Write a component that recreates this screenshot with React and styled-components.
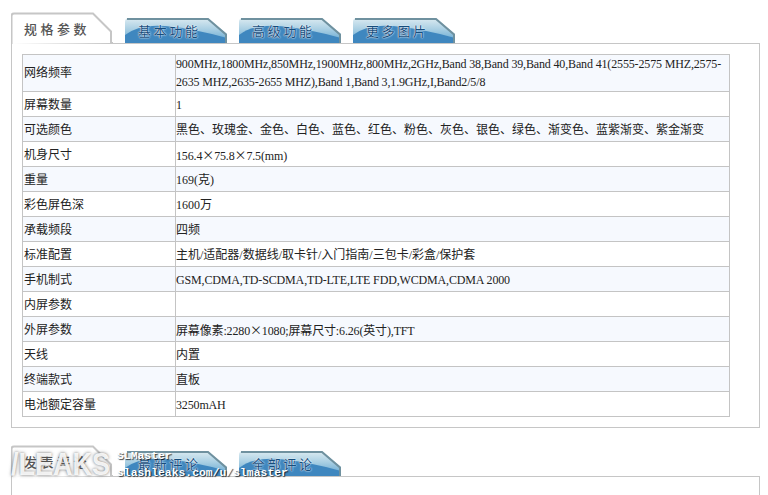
import styled, { createGlobalStyle } from 'styled-components';

const specs = [
  ['网络频率', '900MHz,1800MHz,850MHz,1900MHz,800MHz,2GHz,Band 38,Band 39,Band 40,Band 41(2555-2575 MHZ,2575-2635 MHZ,2635-2655 MHZ),Band 1,Band 3,1.9GHz,I,Band2/5/8'],
  ['屏幕数量', '1'],
  ['可选颜色', '黑色、玫瑰金、金色、白色、蓝色、红色、粉色、灰色、银色、绿色、渐变色、蓝紫渐变、紫金渐变'],
  ['机身尺寸', '156.4×75.8×7.5(mm)'],
  ['重量', '169(克)'],
  ['彩色屏色深', '1600万'],
  ['承载频段', '四频'],
  ['标准配置', '主机/适配器/数据线/取卡针/入门指南/三包卡/彩盒/保护套'],
  ['手机制式', 'GSM,CDMA,TD-SCDMA,TD-LTE,LTE FDD,WCDMA,CDMA 2000'],
  ['内屏参数', ''],
  ['外屏参数', '屏幕像素:2280×1080;屏幕尺寸:6.26(英寸),TFT'],
  ['天线', '内置'],
  ['终端款式', '直板'],
  ['电池额定容量', '3250mAH'],
];

// the × in the original is the wide CJK glyph
function specValue(value) {
  return value.split('×').map((part, i) => (
    <span key={i}>
      {i > 0 && <WideTimes>×</WideTimes>}
      {part}
    </span>
  ));
}

export default function App() {
  return (
    <Page>
      <GlobalStyle />
      <Section>
        <TabBar>
          <ActiveTab label="规格参数" />
          <BlueTab label="基本功能" id="a" />
          <BlueTab label="高级功能" id="b" />
          <BlueTab label="更多图片" id="c" />
        </TabBar>
        <Panel>
          <SpecTable>
            <tbody>
              {specs.map(([name, value]) => (
                <tr key={name}>
                  <LabelCell>{name}</LabelCell>
                  <ValueCell $latin={/^[\x00-\x7f]+$|×/.test(value)}>{specValue(value)}</ValueCell>
                </tr>
              ))}
            </tbody>
          </SpecTable>
        </Panel>
      </Section>
      <CommentSection>
        <TabBar>
          <ActiveTab label="发表评论" />
          <BlueTab label="最新评论" id="d" />
          <BlueTab label="全部评论" id="e" />
        </TabBar>
        <EmptyPanel />
      </CommentSection>
      <LeaksMark>/LEAKS</LeaksMark>
      <MarkName>SLMaster</MarkName>
      <MarkUrl>slashleaks.com/u/slmaster</MarkUrl>
    </Page>
  );
}

function ActiveTab({ label }) {
  return (
    <ActiveTabBox>
      <TabShape width="102" height="32" viewBox="0 0 102 32">
        <path d="M0.5 32V4Q0.5 1.5 3 1.5H82L100 19.5V31H102" fill="#fff" stroke="#c6c6c6" strokeWidth="2" />
        <path d="M0.5 32V5" stroke="#c6c6c6" strokeWidth="1" fill="none" />
      </TabShape>
      <ActiveLabel>{label}</ActiveLabel>
    </ActiveTabBox>
  );
}

function BlueTab({ label, id }) {
  return (
    <BlueTabBox>
      <TabShape width="102" height="25" viewBox="0 0 102 25">
        <defs>
          <linearGradient id={id} x1="0" y1="0" x2="0" y2="1">
            <stop offset="0" stopColor="#dcebf1" />
            <stop offset="0.45" stopColor="#a9cfe3" />
            <stop offset="1" stopColor="#5da3cf" />
          </linearGradient>
        </defs>
        <path d="M0 25V4Q0 0 4 0H83L102 16V25Z" fill={`url(#${id})`} />
        <path d="M0 25V17Q14 6 40 8Q66 10 102 20V25Z" fill="#3f87bf" />
        <path d="M2 1H83L101 16.5V25" fill="none" stroke="#6f919f" strokeWidth="2" />
      </TabShape>
      <BlueLabel>{label}</BlueLabel>
    </BlueTabBox>
  );
}

const GlobalStyle = createGlobalStyle`
  html, body {
    margin: 0;
    padding: 0;
    background: #fff;
  }
`;

const Page = styled.div`
  position: relative;
  box-sizing: border-box;
  width: 768px;
  height: 495px;
  padding: 12px 8px 0 11px;
  overflow: hidden;
  font-family: "Liberation Serif", "Noto Sans CJK SC", serif;
  font-size: 12px;
  color: #222;
`;

const Section = styled.section`
  display: flex;
  flex-direction: column;
`;

const CommentSection = styled(Section)`
  margin-top: 17px;
`;

const TabBar = styled.div`
  display: flex;
  align-items: flex-end;
  gap: 12px;
  height: 32px;
  margin-bottom: -1px;
  position: relative;
  z-index: 1;
`;

const ActiveTabBox = styled.div`
  position: relative;
  width: 102px;
  height: 32px;
`;

const BlueTabBox = styled.div`
  position: relative;
  width: 102px;
  height: 25px;
  margin-bottom: 1px;
`;

const TabShape = styled.svg`
  position: absolute;
  inset: 0;
  display: block;
`;

const ActiveLabel = styled.span`
  position: relative;
  display: block;
  padding: 7px 0 0 13px;
  font-family: "Noto Sans CJK SC", sans-serif;
  font-size: 13px;
  font-weight: 500;
  line-height: 19px;
  letter-spacing: 3.5px;
  color: #555;
`;

const BlueLabel = styled.span`
  position: relative;
  display: block;
  padding: 3px 0 0 13px;
  font-family: "Noto Sans CJK SC", sans-serif;
  font-size: 13px;
  line-height: 19px;
  letter-spacing: 2.7px;
  color: #164d7c;
  text-shadow: 0 0 2px #fff, 0 0 1px #fff;
`;

const Panel = styled.div`
  box-sizing: border-box;
  width: 749px;
  height: 385px;
  padding: 10px;
  border: 1px solid #c6c6c6;
`;

const EmptyPanel = styled(Panel)`
  height: 60px;
`;

const SpecTable = styled.table`
  width: 708px;
  border-collapse: collapse;
  table-layout: fixed;
  line-height: 18px;

  tr:nth-child(odd) td {
    background: #f6f9fe;
  }

  tr:first-child td {
    padding-top: 0;
  }
`;

const LabelCell = styled.td`
  width: 153px;
  height: 25px;
  padding: 2px 1px 0;
  box-sizing: border-box;
  border: 1px solid #c4c4c4;
  font-size: 12px;
`;

const ValueCell = styled.td`
  padding: 2px 0 0;
  border: 1px solid #c4c4c4;
  letter-spacing: ${(p) => (p.$latin ? '-0.15px' : '0')};
`;

const WideTimes = styled.span`
  font-family: "Noto Sans CJK SC", sans-serif;
`;

const LeaksMark = styled.div`
  position: absolute;
  z-index: 2;
  left: 11px;
  top: 449px;
  font-family: "Liberation Sans", sans-serif;
  font-size: 27px;
  font-weight: 700;
  line-height: 32px;
  color: rgba(255, 255, 255, 0.9);
  text-shadow: 0 0 3px rgba(70, 70, 70, 0.8);
  transform: scaleY(1.15);
`;

const MarkText = styled.div`
  position: absolute;
  z-index: 3;
  left: 117px;
  font-family: "Liberation Mono", monospace;
  font-size: 11.4px;
  font-weight: 700;
  line-height: 12px;
  color: #fff;
  text-shadow: 1px 1px 1px rgba(0, 0, 0, 0.75);
`;

const MarkName = styled(MarkText)`
  top: 450px;
`;

const MarkUrl = styled(MarkText)`
  top: 467px;
`;
